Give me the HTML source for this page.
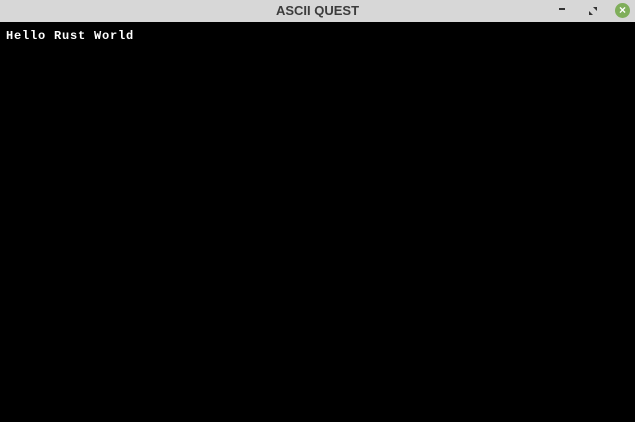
<!DOCTYPE html>
<html><head><meta charset="utf-8"><style>
html,body{margin:0;padding:0;width:635px;height:422px;overflow:hidden;background:#000}
#bar{position:absolute;left:0;top:0;width:635px;height:22px;background:#d7d7d7}
#title{position:absolute;left:0;right:0;top:3px;text-align:center;font:bold 13px "Liberation Sans",sans-serif;color:#3c3c3c}
#min{position:absolute;left:559px;top:8px;width:6px;height:2px;background:#333}
#close{position:absolute;left:615px;top:3px;width:15px;height:15px;border-radius:50%;background:#7fae5a;color:#fff;font:bold 12px "Liberation Sans",sans-serif;text-align:center;line-height:15px}
#txt{position:absolute;left:6px;top:29px;font:bold 12px "Liberation Mono",monospace;color:#fff;letter-spacing:0.8px;white-space:pre}
</style></head><body>
<div id="bar"><div id="title">ASCII QUEST</div><div id="min"></div>
<svg style="position:absolute;left:588px;top:6px" width="10" height="10" viewBox="0 0 10 10"><path d="M1 5V9H5Z M9 5V1H5Z" fill="#333"/></svg>
<div id="close">×</div></div>
<div id="txt">Hello Rust World</div>
</body></html>
